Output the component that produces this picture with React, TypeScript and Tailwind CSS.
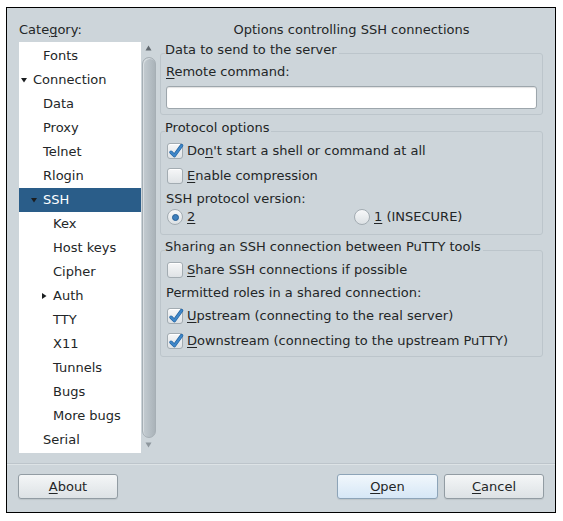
import React from "react"

const font = { fontFamily: '"DejaVu Sans", Verdana, sans-serif' }

type TreeItem = { label: string; level: number; arrow?: "down" | "right"; selected?: boolean }

const tree: TreeItem[] = [
    { label: "Fonts", level: 1 },
    { label: "Connection", level: 0, arrow: "down" },
    { label: "Data", level: 1 },
    { label: "Proxy", level: 1 },
    { label: "Telnet", level: 1 },
    { label: "Rlogin", level: 1 },
    { label: "SSH", level: 1, arrow: "down", selected: true },
    { label: "Kex", level: 2 },
    { label: "Host keys", level: 2 },
    { label: "Cipher", level: 2 },
    { label: "Auth", level: 2, arrow: "right" },
    { label: "TTY", level: 2 },
    { label: "X11", level: 2 },
    { label: "Tunnels", level: 2 },
    { label: "Bugs", level: 2 },
    { label: "More bugs", level: 2 },
    { label: "Serial", level: 1 },
]

const padByLevel = ["pl-[14px]", "pl-[24px]", "pl-[34px]"]

function Arrow({ dir }: { dir: "down" | "right" }) {
    return (
        <svg width="6" height="6" viewBox="0 0 6 6" className="absolute -left-[12px] top-1/2 -translate-y-1/2">
            {dir === "down" ? <path d="M0 1 L6 1 L3 5.5 Z" fill="#1b1e20" /> : <path d="M1 0 L5.5 3 L1 6 Z" fill="#1b1e20" />}
        </svg>
    )
}

function Check() {
    return (
        <svg width="16" height="16" viewBox="0 0 16 16" className="absolute left-0 top-0 overflow-visible">
            <path d="M3 8.2 L6.4 11.6 L13.6 1.6" fill="none" stroke="#1f5f9c" strokeWidth="3.4" strokeLinecap="round" strokeLinejoin="round" />
            <path d="M3 8.2 L6.4 11.6 L13.6 1.6" fill="none" stroke="#3f87c9" strokeWidth="2.2" strokeLinecap="round" strokeLinejoin="round" />
        </svg>
    )
}

function CheckBox({ checked }: { checked?: boolean }) {
    return (
        <span className="relative inline-block w-[16px] h-[16px] shrink-0 rounded-[3px] border border-[#a3acb2] bg-gradient-to-b from-[#f6f7f8] to-[#dfe3e6] shadow-[inset_0_1px_0_#fff]">
            {checked && <Check />}
        </span>
    )
}

function Radio({ checked }: { checked?: boolean }) {
    return (
        <span className="relative flex items-center justify-center w-[16px] h-[16px] shrink-0 rounded-full border border-[#a3acb2] bg-gradient-to-b from-[#f7f8f9] to-[#dce1e4]">
            {checked && <span className="w-[7px] h-[7px] rounded-full bg-[#3d7fbd] border border-[#275f95]" />}
        </span>
    )
}

function U({ children }: { children: React.ReactNode }) {
    return <span className="underline underline-offset-[2px] decoration-1">{children}</span>
}

function Group({ title, children, className }: { title: string; children: React.ReactNode; className?: string }) {
    return (
        <fieldset className={"border border-[#bcc5cb] rounded-[3px] " + (className ?? "")}>
            <legend className="ml-[4px] pr-[2px] leading-[16px] pb-[6px]">{title}</legend>
            <div className="px-[5px]">{children}</div>
        </fieldset>
    )
}

function Button({ children, primary, className }: { children: React.ReactNode; primary?: boolean; className?: string }) {
    const look = primary
        ? "bg-gradient-to-b from-[#f1f7fc] to-[#d6e7f6] border-[#8da4b8]"
        : "bg-gradient-to-b from-[#f4f6f7] to-[#dde2e5] border-[#929ca3]"
    return (
        <button className={"w-[100px] h-[25px] rounded-[3px] border text-[13px] text-[#232627] shadow-[0_1px_1px_rgba(0,0,0,0.08)] " + look + " " + (className ?? "")}>
            {children}
        </button>
    )
}

export default function App() {
    return (
        <div className="w-[563px] h-[521px] bg-white pt-[7px] pl-[6px]" style={font}>
            <div className="w-[550px] h-[506px] border border-black bg-[#cdd5da] text-[13px] text-[#232627] flex flex-col">
                {/* main area */}
                <div className="flex pt-[13px] pl-[12px] gap-[4px] h-[445px]">
                    {/* category tree */}
                    <div className="w-[137px] flex flex-col">
                        <div className="leading-[18px] h-[18px]">Cate<U>g</U>ory:</div>
                        <div className="flex mt-[3px]">
                            <div className="w-[122px] h-[411px] bg-white pt-[2px]">
                                {tree.map((t) => (
                                    <div
                                        key={t.label}
                                        className={"h-[24px] flex items-center " + padByLevel[t.level] + (t.selected ? " bg-[#2a5d89] text-white" : "")}
                                    >
                                        <span className="relative leading-[16px]">
                                            {t.arrow && <Arrow dir={t.arrow} />}
                                            {t.label}
                                        </span>
                                    </div>
                                ))}
                            </div>
                            {/* scrollbar */}
                            <div className="w-[15px] flex flex-col items-center">
                                <svg width="7" height="6" viewBox="0 0 7 6" className="mt-[3px]">
                                    <path d="M0.5 5.5 L3.5 0.5 L6.5 5.5 Z" fill="#60686e" />
                                </svg>
                                <div className="mt-[6px] w-[14px] h-[381px] rounded-full border border-[#a6afb5] bg-gradient-to-r from-[#c4ccd1] via-[#b7c0c6] to-[#aab3b9] shadow-[inset_1px_1px_0_#d8dee2]" />
                                <svg width="7" height="6" viewBox="0 0 7 6" className="mt-[4px]">
                                    <path d="M0.5 0.5 L6.5 0.5 L3.5 5.5 Z" fill="#8e979d" />
                                </svg>
                            </div>
                        </div>
                    </div>

                    {/* options panel */}
                    <div className="w-[383px] flex flex-col">
                        <div className="leading-[18px] h-[18px] text-center">Options controlling SSH connections</div>

                        <Group title="Data to send to the server" className="mt-[3px] pb-[5px]">
                            <div className="leading-[16px]"><U>R</U>emote command:</div>
                            <div className="mt-[6px] h-[23px] bg-white border border-[#9da6ac] rounded-[3px] shadow-[inset_0_1px_1px_rgba(0,0,0,0.12)]" />
                        </Group>

                        <Group title="Protocol options" className="mt-[5px] pb-[8px]">
                            <div className="flex items-center gap-[4px] h-[18px] ml-[1px]">
                                <CheckBox checked />
                                <span>Do<U>n</U>'t start a shell or command at all</span>
                            </div>
                            <div className="flex items-center gap-[4px] h-[18px] mt-[7px] ml-[1px]">
                                <CheckBox />
                                <span><U>E</U>nable compression</span>
                            </div>
                            <div className="leading-[16px] mt-[6px]">SSH protocol version:</div>
                            <div className="flex items-center h-[18px] mt-[1px] ml-[1px]">
                                <div className="flex items-center gap-[4px] w-[187px]">
                                    <Radio checked />
                                    <U>2</U>
                                </div>
                                <div className="flex items-center gap-[4px]">
                                    <Radio />
                                    <span><U>1</U> (INSECURE)</span>
                                </div>
                            </div>
                        </Group>

                        <Group title="Sharing an SSH connection between PuTTY tools" className="mt-[4px] pb-[6px]">
                            <div className="flex items-center gap-[4px] h-[18px] ml-[1px]">
                                <CheckBox />
                                <span><U>S</U>hare SSH connections if possible</span>
                            </div>
                            <div className="leading-[16px] mt-[6px]">Permitted roles in a shared connection:</div>
                            <div className="flex items-center gap-[4px] h-[18px] mt-[6px] ml-[1px]">
                                <CheckBox checked />
                                <span><U>U</U>pstream (connecting to the real server)</span>
                            </div>
                            <div className="flex items-center gap-[4px] h-[18px] mt-[7px] ml-[1px]">
                                <CheckBox checked />
                                <span><U>D</U>ownstream (connecting to the upstream PuTTY)</span>
                            </div>
                        </Group>
                    </div>
                </div>

                {/* separator */}
                <div className="mt-[10px] border-t border-[#bdc5cb] shadow-[0_1px_0_#dde3e6]" />

                {/* buttons */}
                <div className="flex items-center mt-[10px] pl-[11px] pr-[11px]">
                    <Button><U>A</U>bout</Button>
                    <div className="flex-1" />
                    <Button primary className="w-[101px]"><U>O</U>pen</Button>
                    <Button className="ml-[6px]"><U>C</U>ancel</Button>
                </div>
            </div>
        </div>
    )
}
